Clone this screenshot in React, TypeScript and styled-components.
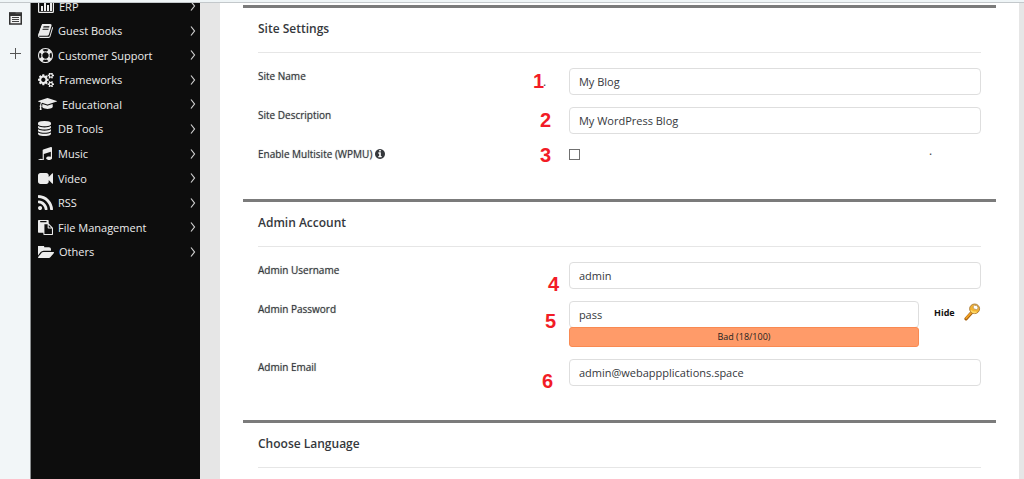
import React from "react";
import styled, { createGlobalStyle } from "styled-components";

const GlobalStyle = createGlobalStyle`
  *, *::before, *::after { box-sizing: border-box; }
  body {
    margin: 0;
    background: #e6e6e6;
    color: #35383c;
    font-family: "Open Sans", "Noto Sans", sans-serif;
    font-size: 11px;
  }
  input, button { font: inherit; color: inherit; }
`;

const Page = styled.div`
  display: flex;
  flex-direction: column;
  min-height: 100vh;
`;

const TopEdge = styled.div`
  height: 3px;
  background: #eff5f7;
  border-bottom: 1px solid #c3c8cb;
`;

const Columns = styled.div`
  flex: 1;
  display: flex;
`;

const Rail = styled.nav`
  flex: none;
  width: 31px;
  padding-top: 9px;
  display: flex;
  flex-direction: column;
  align-items: center;
  gap: 23px;
  background: #f2f6f8;
  border-right: 1px solid #8b8e90;
`;

const RailButton = styled.button`
  display: flex;
  padding: 0;
  border: 0;
  background: none;
  color: #333;
  svg { display: block; }
`;

const Sidebar = styled.nav`
  flex: none;
  width: 169px;
  background: #0d0d0d;
  overflow: hidden;
`;

const MenuList = styled.ul`
  display: flex;
  flex-direction: column;
  justify-content: space-between;
  height: 270px;
  margin: -9px 0 0;
  padding: 0;
  list-style: none;
`;

const MenuLink = styled.a`
  display: flex;
  align-items: center;
  gap: 5px;
  height: 24px;
  padding: 0 4px 0 7px;
  color: #ececec;
  font-size: 11px;
  text-decoration: none;
`;

const MenuIcon = styled.span`
  display: flex;
  min-width: 15px;
  svg { display: block; fill: #ececec; }
`;

const MenuText = styled.span`
  flex: 1;
  white-space: nowrap;
`;

const Panel = styled.main`
  flex: 1;
  min-width: 0;
  margin: 0 5px 0 20px;
  padding: 2px 23px 0;
  background: #fff;
`;

const Section = styled.section`
  border-top: 3px solid #7b7b7b;
  padding: 0 15px 34px;
  &:last-child { padding-bottom: 0; }
`;

const SectionTitle = styled.h2`
  margin: 0 0 15px;
  padding-top: 11px;
  height: 45px;
  border-bottom: 1px solid #e6e6e6;
  font-size: 12px;
  line-height: 20px;
  font-weight: 600;
  ${Section}:last-child & { margin-bottom: 0; }
`;

const Rows = styled.div`
  display: flex;
  flex-direction: column;
  gap: 12px;
`;

const Row = styled.div`
  display: grid;
  grid-template-columns: 43fr 57fr;
`;

const Label = styled.label`
  display: flex;
  align-items: center;
  align-self: start;
  gap: 3px;
  font-size: 10px;
  line-height: 16px;
  text-shadow: 0 0 1px rgba(53, 56, 60, 0.6);
  svg { display: block; }
`;

const Field = styled.div`
  position: relative;
  display: flex;
  align-items: flex-start;
`;

const FieldStack = styled.div`
  flex: 1;
  min-width: 0;
`;

const TextInput = styled.input`
  display: block;
  width: 100%;
  height: 27px;
  padding: 0 9px;
  border: 1px solid #dedede;
  border-radius: 4px;
  background: #fff;
  font-size: 11px;
  outline: none;
`;

const CheckInput = styled.input`
  appearance: none;
  width: 11px;
  height: 11px;
  margin: 3px 0 5px;
  border: 1px solid #707070;
  background: #fff;
`;

const Strength = styled.div`
  height: 20px;
  margin-top: -1px;
  border: 1px solid #f98a52;
  border-radius: 3px;
  background: #ff9b69;
  color: #222;
  font-size: 9px;
  line-height: 18px;
  text-align: center;
`;

const PasswordTools = styled.div`
  display: flex;
  align-items: center;
  justify-content: space-between;
  width: 62px;
  height: 22px;
  padding-left: 15px;
`;

const PlainButton = styled.button`
  display: flex;
  padding: 0;
  border: 0;
  background: none;
  color: #111;
  font-size: 9px;
  font-weight: 700;
  svg { display: block; }
`;

/* Red step number laid over the form beside its field. */
const Step = styled.span<{ $x: number; $y: number }>`
  position: absolute;
  left: ${(p) => p.$x}px;
  top: ${(p) => p.$y}px;
  color: #f21c26;
  font-family: "Liberation Sans", Arial, sans-serif;
  font-size: 20px;
  line-height: 20px;
  font-weight: 700;
`;

const Dot = styled.span<{ $x: number; $y: number }>`
  position: absolute;
  left: ${(p) => p.$x}px;
  top: ${(p) => p.$y}px;
  color: #444;
  font-size: 12px;
  line-height: 16px;
`;

type Glyph = { box: string; w: number; h: number; d: string };

const glyphs: Record<string, Glyph> = {
  chart: {
    box: "0 0 16 14", w: 16, h: 14,
    d: "M1.500 0h13q1.500 0 1.500 1.500v11q0 1.500-1.500 1.500h-13q-1.500 0-1.500-1.500v-11q0-1.500 1.500-1.500zM1.200 1.200v11.600h13.600v-11.600zM3 7h2v5h-2zM6 4h2v8h-2zM9 6h2v6h-2zM12 3h2v9h-2z",
  },
  book: {
    box: "60 128 1670 1536", w: 15, h: 14,
    d: "M1703 478q40 57 18 129l-275 906q-19 64-76.5 107.5t-122.5 43.5h-923q-77 0-148.5-53.5t-99.5-131.5q-24-67-2-127 0-4 3-27t4-37q1-8-3-21.5t-3-19.500q2-11 8-21t16.500-23.500 16.500-23.500q23-38 45-91.500t30-91.500q3-10 .5-30t-.5-28q3-11 17-28t17-23q21-36 42-92t25-90q1-9-2.500-32t.5-28q4-13 22-30.500t22-22.500q19-26 42.500-84.500t27.500-96.500q1-8-3-25.500t-2-26.500q2-8 9-18t18-23 17-21q8-12 16.500-30.500t15-35 16-36 19.500-32 26.500-23.500 36-11.500 47.500 5.500l-1 3q38-9 51-9h761q74 0 114 56t18 130l-274 906q-36 119-71.500 153.500t-128.500 34.500h-869q-27 0-38 15-11 16-1 43 24 70 144 70h923q29 0 56-15.500t35-41.500l300-987q7-22 5-57 38 15 59 43zm-1064 2q-4 13 2 22.500t20 9.500h608q13 0 25.500-9.500t16.500-22.500l21-64q4-13-2-22.500t-20-9.500h-608q-13 0-25.500 9.500t-16.500 22.500zm-83 256q-4 13 2 22.500t20 9.500h608q13 0 25.500-9.500t16.500-22.500l21-64q4-13-2-22.500t-20-9.500h-608q-13 0-25.500 9.500t-16.500 22.500z",
  },
  ring: {
    box: "0 0 1792 1792", w: 15, h: 15,
    d: "M896 0q182 0 348 71t286 191 191 286 71 348-71 348-191 286-286 191-348 71-348-71-286-191-191-286-71-348 71-348 191-286 286-191 348-71zm0 128q-190 0-361 90l194 194q82-28 167-28t167 28l194-194q-171-90-361-90zm-678 1129l194-194q-28-82-28-167t28-167l-194-194q-90 171-90 361t90 361zm678 407q190 0 361-90l-194-194q-82 28-167 28t-167-28l-194 194q171 90 361 90zm0-384q159 0 271.5-112.5t112.5-271.5-112.5-271.5-271.5-112.5-271.5 112.5-112.5 271.5 112.5 271.5 271.5 112.5zm484-217l194 194q90-171 90-361t-90-361l-194 194q28 82 28 167t-28 167z",
  },
  cogs: {
    box: "0 100 1920 1640", w: 16, h: 14,
    d: "M896 896q0-106-75-181t-181-75-181 75-75 181 75 181 181 75 181-75 75-181zm768 512q0-52-38-90t-90-38-90 38-38 90q0 53 37.5 90.5t90.5 37.5 90.5-37.5 37.5-90.5zm0-1024q0-52-38-90t-90-38-90 38-38 90q0 53 37.5 90.5t90.5 37.5 90.5-37.5 37.5-90.5zm-384 421v185q0 10-7 19.5t-16 10.5l-155 24q-11 35-32 76 34 48 90 115 7 11 7 20 0 12-7 19-23 30-82.5 89.5t-78.5 59.5q-11 0-21-7l-115-90q-37 19-77 31-11 108-23 155-7 24-30 24h-186q-11 0-20-7.5t-10-17.5l-23-153q-34-10-75-31l-118 89q-7 7-20 7-11 0-21-8-144-133-144-160 0-9 7-19 10-14 41-53t47-61q-23-44-35-82l-152-24q-10-1-17-9.5t-7-19.5v-185q0-10 7-19.5t16-10.5l155-24q11-35 32-76-34-48-90-115-7-11-7-20 0-12 7-20 22-30 82-89t79-59q11 0 21 7l115 90q34-18 77-32 11-108 23-154 7-24 30-24h186q11 0 20 7.5t10 17.5l23 153q34 10 75 31l118-89q8-7 20-7 11 0 21 8 144 133 144 160 0 8-7 19-12 16-42 54t-45 60q23 48 34 82l152 23q10 2 17 10.5t7 19.5zm640 533v140q0 16-149 31-12 27-30 52 51 113 51 138 0 4-4 7-122 71-124 71-8 0-46-47t-52-68q-20 2-30 2t-30-2q-14 21-52 68t-46 47q-2 0-124-71-4-3-4-7 0-25 51-138-18-25-30-52-149-15-149-31v-140q0-16 149-31 13-29 30-52-51-113-51-138 0-4 4-7 4-2 35-20t59-34 30-16q8 0 46 46.5t52 67.5q20-2 30-2t30 2q51-71 92-112l6-2q4 0 124 70 4 3 4 7 0 25-51 138 17 23 30 52 149 15 149 31zm0-1024v140q0 16-149 31-12 27-30 52 51 113 51 138 0 4-4 7-122 71-124 71-8 0-46-47t-52-68q-20 2-30 2t-30-2q-14 21-52 68t-46 47q-2 0-124-71-4-3-4-7 0-25 51-138-18-25-30-52-149-15-149-31v-140q0-16 149-31 13-29 30-52-51-113-51-138 0-4 4-7 4-2 35-20t59-34 30-16q8 0 46 46.5t52 67.5q20-2 30-2t30 2q51-71 92-112l6-2q4 0 124 70 4 3 4 7 0 25-51 138 17 23 30 52 149 15 149 31z",
  },
  cap: {
    box: "0 0 2304 1408", w: 19, h: 12,
    d: "M1774 708l18 316q4 69-82 128t-235 93.5-323 34.5-323-34.5-235-93.5-82-128l18-316 574 181q22 7 48 7t48-7zm530-324q0 23-22 31l-1120 352q-4 1-10 1t-10-1l-652-206q-43 34-71 111.5t-34 178.5q63 36 63 109 0 69-58 107l58 433q2 14-8 25-9 11-24 11h-192q-15 0-24-11-10-11-8-25l58-433q-58-38-58-107 0-73 65-111 11-207 98-330l-333-104q-22-8-22-31t22-31l1120-352q4-1 10-1t10 1l1120 352q22 8 22 31z",
  },
  database: {
    box: "128 0 1536 1792", w: 13, h: 15,
    d: "M896 768q237 0 443-43t325-127v170q0 69-103 128t-280 93.5-385 34.5-385-34.5-280-93.5-103-128v-170q119 84 325 127t443 43zm0 768q237 0 443-43t325-127v170q0 69-103 128t-280 93.5-385 34.5-385-34.5-280-93.5-103-128v-170q119 84 325 127t443 43zm0-384q237 0 443-43t325-127v170q0 69-103 128t-280 93.5-385 34.5-385-34.5-280-93.5-103-128v-170q119 84 325 127t443 43zm0-1152q208 0 385 34.5t280 93.5 103 128v128q0 69-103 128t-280 93.5-385 34.5-385-34.5-280-93.5-103-128v-128q0-69 103-128t280-93.5 385-34.5z",
  },
  music: {
    box: "128 128 1536 1408", w: 14, h: 13,
    d: "M1664 224v1120q0 50-34 89t-86 60.5-103.5 32-96.5 10.5-96.5-10.5-103.5-32-86-60.5-34-89 34-89 86-60.5 103.5-32 96.5-10.5q105 0 192 39v-537l-768 237v709q0 50-34 89t-86 60.5-103.5 32-96.5 10.5-96.5-10.5-103.5-32-86-60.5-34-89 34-89 86-60.5 103.5-32 96.5-10.5q105 0 192 39v-967q0-31 19-56.5t49-35.5l832-256q12-4 28-4 40 0 68 28t28 68z",
  },
  video: {
    box: "0 256 1792 1280", w: 15, h: 11,
    d: "M1792 352v1088q0 42-39 59-13 5-25 5-27 0-45-19l-403-403v166q0 119-84.5 203.5t-203.5 84.5h-704q-119 0-203.5-84.5t-84.5-203.5v-704q0-119 84.5-203.5t203.5-84.5h704q119 0 203.5 84.5t84.5 203.5v165l403-402q18-19 45-19 12 0 25 5 39 17 39 59z",
  },
  rss: {
    box: "192 128 1408 1408", w: 15, h: 15,
    d: "M576 1344q0 80-56 136t-136 56-136-56-56-136 56-136 136-56 136 56 56 136zm512 123q2 28-17 48-18 21-47 21h-135q-25 0-43-16.5t-20-41.5q-22-229-184.5-391.5t-391.5-184.5q-25-2-41.5-20t-16.5-43v-135q0-29 21-47 17-17 43-17h5q160 13 306 80.5t259 181.5q114 113 181.5 259t80.5 306zm512 2q2 27-18 47-18 20-46 20h-143q-26 0-44.5-17.5t-19.5-42.5q-12-215-101-408.5t-231.5-336-336-231.5-408.5-102q-25-1-42.5-19.5t-17.5-43.5v-143q0-28 20-46 18-18 44-18h3q262 13 501.5 120t425.5 294q187 186 294 425.5t120 501.5z",
  },
  paste: {
    box: "0 0 1792 1792", w: 15, h: 15,
    d: "M768 1664h896v-640h-416q-40 0-68-28t-28-68v-416h-384v1152zm256-1440v-64q0-13-9.5-22.5t-22.5-9.5h-704q-13 0-22.5 9.5t-9.5 22.5v64q0 13 9.5 22.5t22.5 9.5h704q13 0 22.5-9.5t9.5-22.5zm256 672h299l-299-299v299zm512 128v672q0 40-28 68t-68 28h-960q-40 0-68-28t-28-68v-160h-544q-40 0-68-28t-28-68v-1344q0-40 28-68t68-28h1088q40 0 68 28t28 68v328q21 13 36 28l408 408q28 28 48 76t20 88z",
  },
  folder: {
    box: "0 256 1815 1280", w: 16, h: 12,
    d: "M1815 952q0 31-31 66l-336 396q-43 51-120.5 86.5t-143.5 35.5h-1088q-34 0-60.5-13t-26.5-43q0-31 31-66l336-396q43-51 120.5-86.5t143.5-35.5h1088q34 0 60.5 13t26.5 43zm-343-344v160h-832q-94 0-197 47.5t-164 119.5l-337 396-5 6q0-4-.5-12.5t-.5-12.5v-960q0-92 66-158t158-66h320q92 0 158 66t66 158v32h544q92 0 158 66t66 158z",
  },
  info: {
    box: "128 128 1536 1536", w: 10, h: 10,
    d: "M1152 1376v-160q0-14-9-23t-23-9h-96v-512q0-14-9-23t-23-9h-320q-14 0-23 9t-9 23v160q0 14 9 23t23 9h96v320h-96q-14 0-23 9t-9 23v160q0 14 9 23t23 9h448q14 0 23-9t9-23zm-128-896v-160q0-14-9-23t-23-9h-192q-14 0-23 9t-9 23v160q0 14 9 23t23 9h192q14 0 23-9t9-23zm640 416q0 209-103 385.5t-279.5 279.5-385.5 103-385.5-103-279.5-279.5-103-385.5 103-385.5 279.5-279.5 385.5-103 385.5 103 279.5 279.5 103 385.5z",
  },
};

const Icon = ({ name }: { name: string }) => {
  const g = glyphs[name];
  return (
    <svg width={g.w} height={g.h} viewBox={g.box} preserveAspectRatio="none" fill="currentColor" fillRule={name === "chart" ? "evenodd" : "nonzero"} aria-hidden="true">
      <path d={g.d} />
    </svg>
  );
};

const Chevron = () => (
  <svg width="6" height="10" viewBox="0 0 6 10" fill="none" stroke="#d0d0d0" strokeWidth="1.2" aria-hidden="true">
    <path d="M1 0.500L4.500 5L1 9.500" />
  </svg>
);

const KeyIcon = () => (
  <svg width="17" height="18" viewBox="0 0 17 18" aria-hidden="true">
    <path d="M7.600 9.600L2 15.900" stroke="#a5600f" strokeWidth="3.200" strokeLinecap="round" />
    <path d="M7.800 9.200L2.200 15.200" stroke="#f0a024" strokeWidth="1.800" strokeLinecap="round" />
    <ellipse cx="10.600" cy="5.800" rx="5" ry="4.800" fill="#f4b433" stroke="#a87a3a" strokeWidth="0.900" />
    <path d="M7 7.500Q9 10.200 12.500 9" stroke="#ffd965" strokeWidth="1.500" fill="none" />
    <ellipse cx="11.600" cy="4.400" rx="2.600" ry="2" fill="#fff" stroke="#b9955a" strokeWidth="0.800" transform="rotate(25 11.600 4.400)" />
  </svg>
);

const menu: [string, string][] = [
  ["chart", "ERP"],
  ["book", "Guest Books"],
  ["ring", "Customer Support"],
  ["cogs", "Frameworks"],
  ["cap", "Educational"],
  ["database", "DB Tools"],
  ["music", "Music"],
  ["video", "Video"],
  ["rss", "RSS"],
  ["paste", "File Management"],
  ["folder", "Others"],
];

export default function App() {
  return (
    <Page>
      <GlobalStyle />
      <TopEdge />
      <Columns>
        <Rail aria-label="Shortcuts">
          <RailButton type="button" aria-label="News">
            <svg width="13" height="13" viewBox="0 0 13 13" aria-hidden="true">
              <rect x="0.750" y="1" width="11.500" height="11" fill="#f4f4f4" stroke="#333" strokeWidth="1.500" />
              <path d="M0 0.500H6.500V1.500H13V4H0z" fill="#333" />
              <path d="M3 5.500h7M3 7.500h7M3 9.500h7" stroke="#444" />
            </svg>
          </RailButton>
          <RailButton type="button" aria-label="Add">
            <svg width="11" height="11" viewBox="0 0 11 11" stroke="#555" aria-hidden="true">
              <path d="M5.500 0v11M0 5.500h11" />
            </svg>
          </RailButton>
        </Rail>
        <Sidebar aria-label="Categories">
          <MenuList>
            {menu.map(([icon, text]) => (
              <li key={text}>
                <MenuLink href="#">
                  <MenuIcon><Icon name={icon} /></MenuIcon>
                  <MenuText>{text}</MenuText>
                  <Chevron />
                </MenuLink>
              </li>
            ))}
          </MenuList>
        </Sidebar>
        <Panel>
          <Section>
            <SectionTitle>Site Settings</SectionTitle>
            <Rows>
              <Row>
                <Label htmlFor="site-name">Site Name</Label>
                <Field>
                  <Step $x={-36} $y={3}>1</Step>
                  <Dot $x={-26} $y={6}>.</Dot>
                  <TextInput id="site-name" defaultValue="My Blog" />
                </Field>
              </Row>
              <Row>
                <Label htmlFor="site-desc">Site Description</Label>
                <Field>
                  <Step $x={-29} $y={3}>2</Step>
                  <TextInput id="site-desc" defaultValue="My WordPress Blog" />
                </Field>
              </Row>
              <Row>
                <Label htmlFor="multisite">Enable Multisite (WPMU) <Icon name="info" /></Label>
                <Field>
                  <Step $x={-29} $y={-1}>3</Step>
                  <CheckInput id="multisite" type="checkbox" />
                  <Dot $x={360} $y={-3}>.</Dot>
                </Field>
              </Row>
            </Rows>
          </Section>
          <Section>
            <SectionTitle>Admin Account</SectionTitle>
            <Rows>
              <Row>
                <Label htmlFor="user">Admin Username</Label>
                <Field>
                  <Step $x={-21} $y={12}>4</Step>
                  <TextInput id="user" defaultValue="admin" />
                </Field>
              </Row>
              <Row>
                <Label htmlFor="pass">Admin Password</Label>
                <Field>
                  <Step $x={-24} $y={10}>5</Step>
                  <FieldStack>
                    <TextInput id="pass" defaultValue="pass" />
                    <Strength>Bad (18/100)</Strength>
                  </FieldStack>
                  <PasswordTools>
                    <PlainButton type="button">Hide</PlainButton>
                    <PlainButton type="button" aria-label="Generate password"><KeyIcon /></PlainButton>
                  </PasswordTools>
                </Field>
              </Row>
              <Row>
                <Label htmlFor="email">Admin Email</Label>
                <Field>
                  <Step $x={-27} $y={12}>6</Step>
                  <TextInput id="email" defaultValue="admin@webappplications.space" />
                </Field>
              </Row>
            </Rows>
          </Section>
          <Section>
            <SectionTitle>Choose Language</SectionTitle>
          </Section>
        </Panel>
      </Columns>
    </Page>
  );
}
